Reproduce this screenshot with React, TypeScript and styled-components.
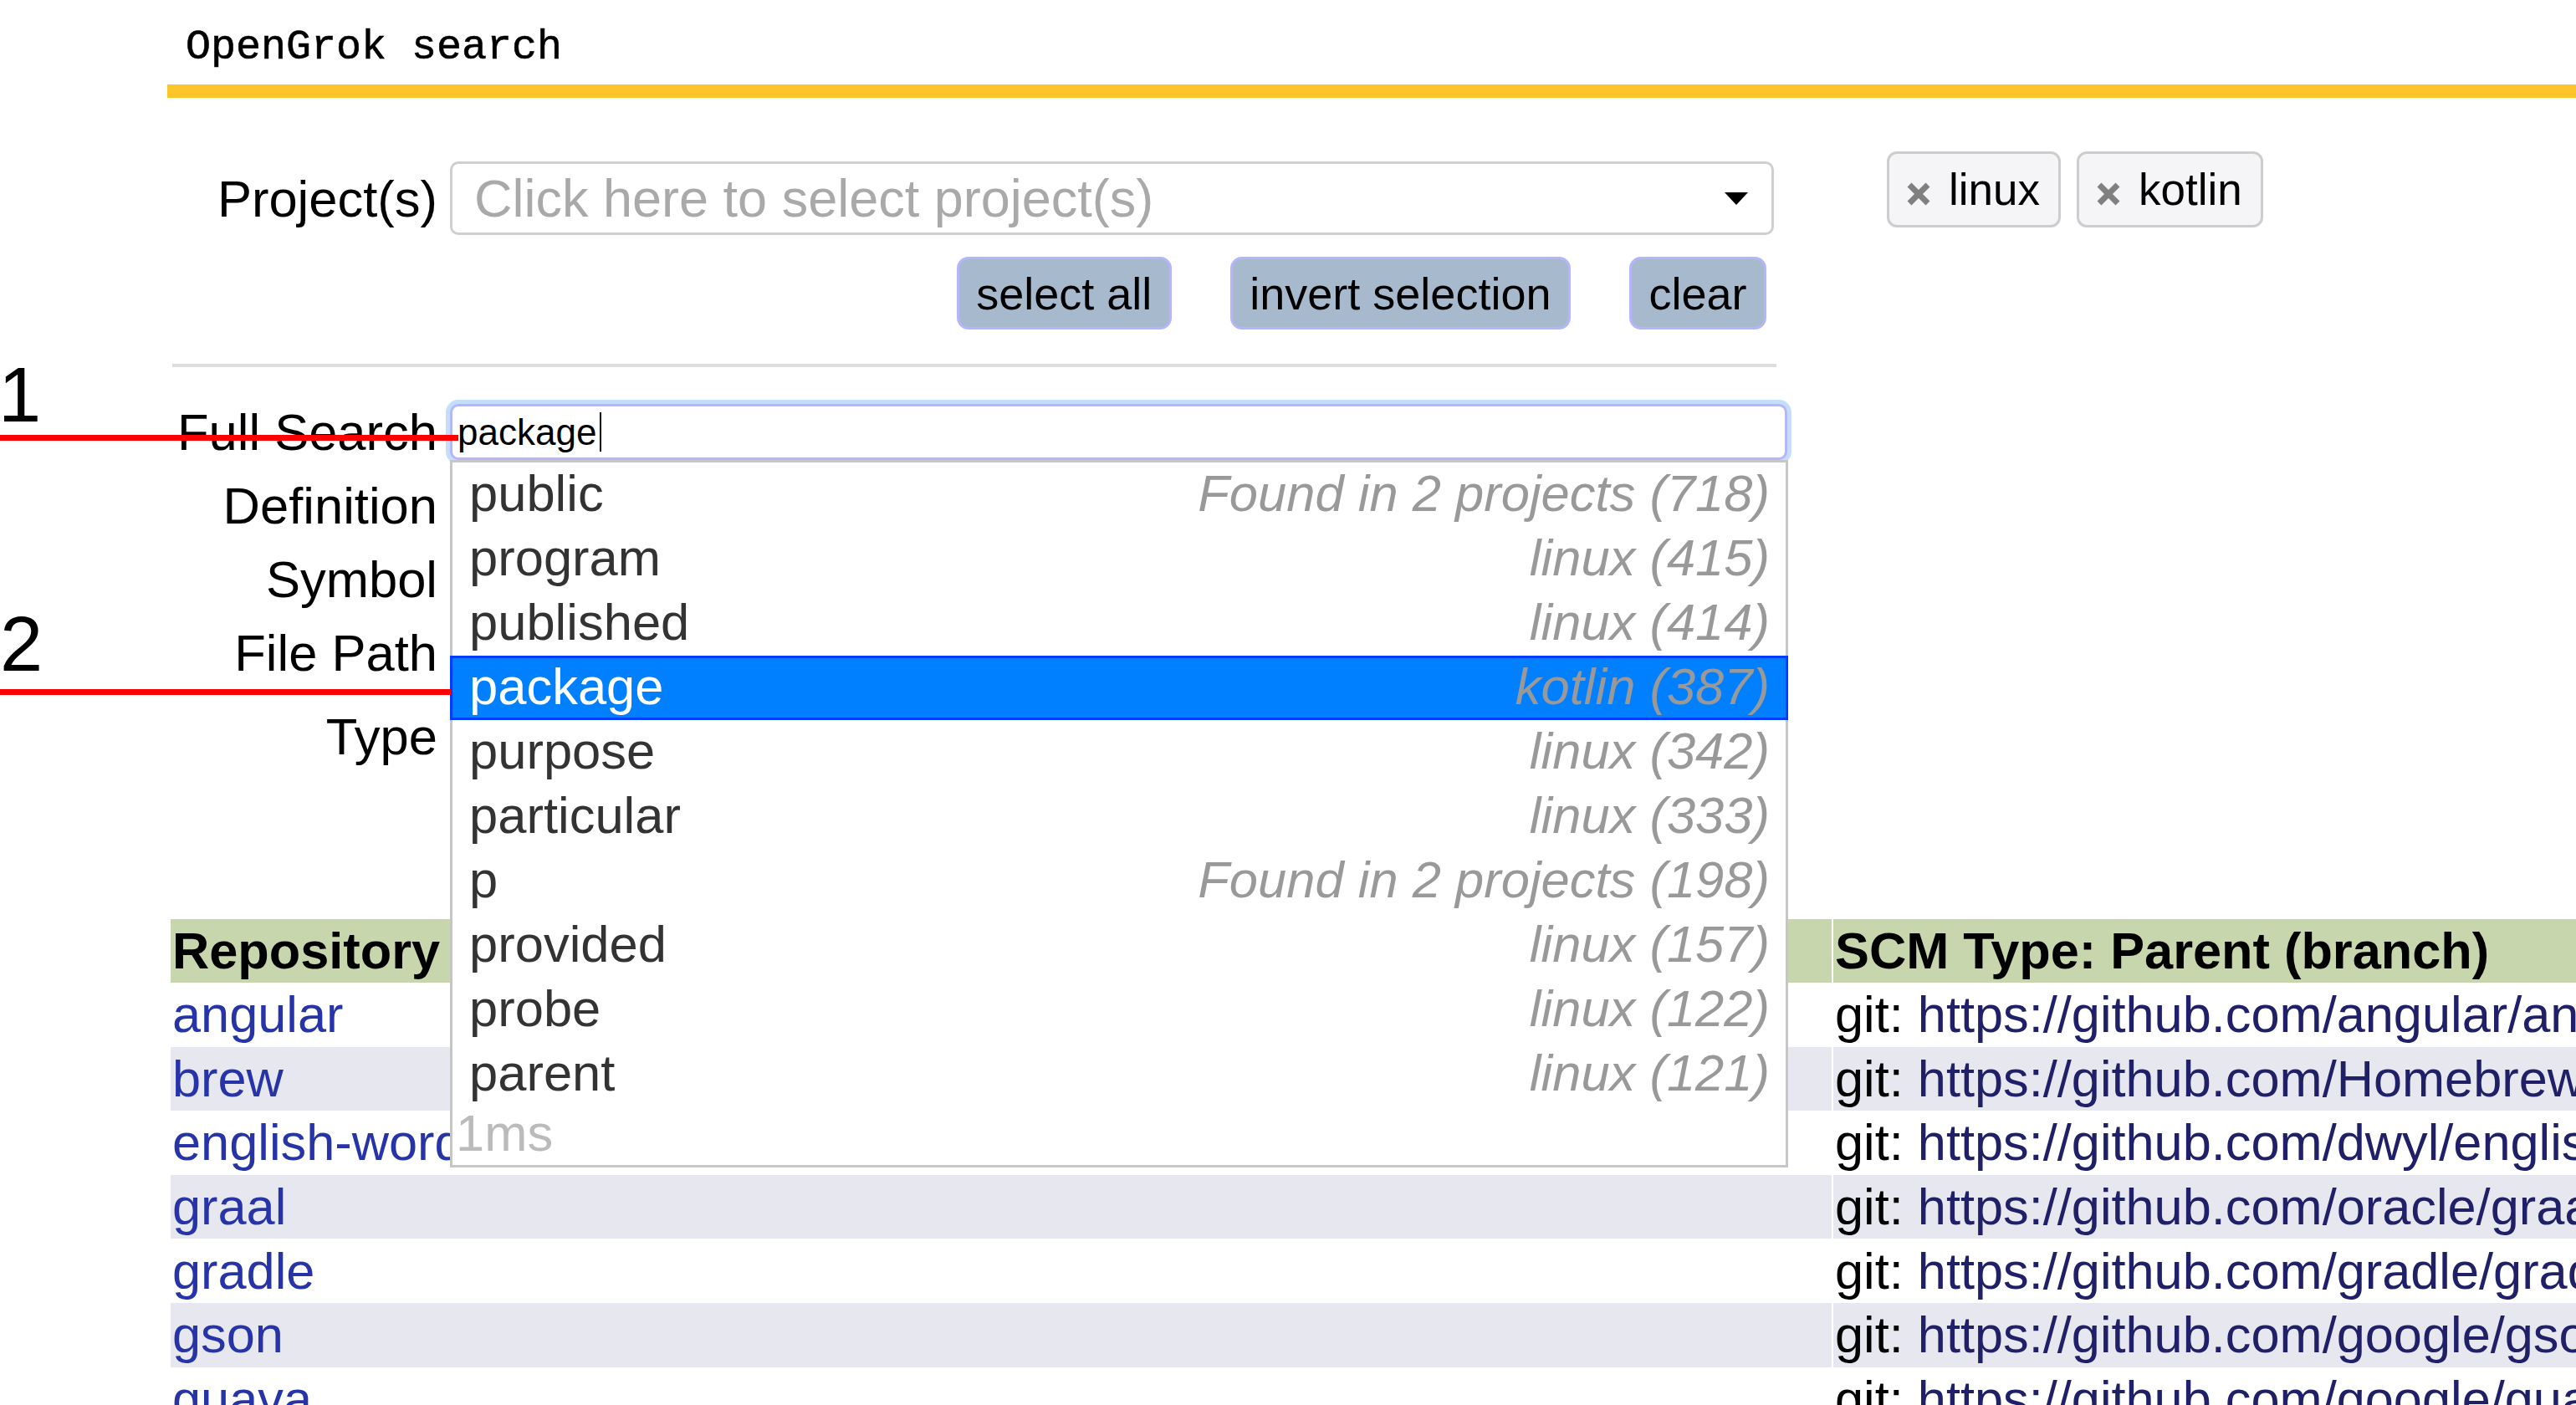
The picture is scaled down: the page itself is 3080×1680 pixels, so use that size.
import React from "react";
import styled, { createGlobalStyle } from "styled-components";

const GlobalStyle = createGlobalStyle`
  html, body {
    margin: 0;
    padding: 0;
    overflow: hidden;
    background: #ffffff;
  }
  body {
    font-family: "Liberation Sans", Arial, Helvetica, sans-serif;
    color: #000;
  }
  * { box-sizing: border-box; }
`;

const Page = styled.div`
  position: relative;
  width: 3080px;
  height: 1680px;
  overflow: hidden;
`;

const Header = styled.header`
  margin-left: 200px;
  padding-top: 32px;
`;

const Title = styled.div`
  font-family: "Liberation Mono", "Courier New", monospace;
  font-size: 50px;
  line-height: 50px;
  padding-left: 22px;
  margin-bottom: 19px;
  -webkit-text-stroke: 0.6px #000;
`;

const Bar = styled.div`
  height: 16px;
  background: #fcc62b;
`;

const Main = styled.main`
  margin-left: 204px;
`;

const ProjectRow = styled.div`
  display: flex;
  align-items: flex-start;
  margin-top: 64px;
`;

const ProjectGroup = styled.div`
  display: flex;
  align-items: center;
  margin-top: 12px;
`;

const RowLabel = styled.label`
  width: 319px;
  margin-right: 15px;
  text-align: right;
  font-size: 61.5px;
  line-height: 61px;
  white-space: nowrap;
`;

const ProjectSelect = styled.div`
  width: 1583px;
  height: 88px;
  border: 3px solid #cfcfcf;
  border-radius: 10px;
  background: #fff;
  display: flex;
  align-items: center;
  justify-content: space-between;
  padding: 0 28px 0 26px;
`;

const Placeholder = styled.span`
  font-size: 63px;
  line-height: 63px;
  color: #a9a9a9;
  white-space: nowrap;
`;

const TagList = styled.div`
  display: flex;
  gap: 19px;
  margin-left: 135px;
`;

const Tag = styled.div`
  height: 91px;
  border: 3px solid #cdcdcd;
  border-radius: 12px;
  background: #f5f5f8;
  display: flex;
  align-items: center;
  padding: 0 22px 0 20px;
  font-size: 53px;
  line-height: 53px;
`;

const TagClose = styled.svg`
  width: 30px;
  height: 28px;
  margin-right: 21px;
  margin-top: 10px;
  flex: none;
`;

const ActionRow = styled.div<{ $width: number; $top: number }>`
  display: flex;
  justify-content: flex-end;
  gap: 70px;
  width: ${(p) => p.$width}px;
  margin-top: ${(p) => p.$top}px;
`;

const ActionButton = styled.button`
  height: 87px;
  border: 3px solid #b5b5fb;
  border-radius: 14px;
  background: #a7b9cd;
  color: #000;
  font-family: "Liberation Sans", Arial, Helvetica, sans-serif;
  font-size: 54px;
  line-height: 54px;
  padding: 0 20.5px;
  white-space: nowrap;
`;

const Divider = styled.hr`
  border: 0;
  margin: 41px 0 0 2px;
  width: 1918px;
  height: 4px;
  background: #dddddd;
`;

const SearchGrid = styled.div`
  display: grid;
  grid-template-columns: 319px 1599px;
  column-gap: 15px;
  row-gap: 21px;
  align-items: center;
  margin-top: 44px;
`;

const FieldLabel = styled.label`
  text-align: right;
  font-size: 61.5px;
  line-height: 61px;
  white-space: nowrap;
`;

const FieldCell = styled.div`
  position: relative;
`;

const FocusedInput = styled.div`
  height: 67px;
  border: 3px solid #b6b6fb;
  border-radius: 10px;
  box-shadow: 0 0 0 5px #c4defd;
  background: #fff;
  display: flex;
  align-items: center;
  padding-left: 6px;
  font-size: 44px;
  line-height: 44px;
  color: #000;
`;

const Caret = styled.span`
  display: inline-block;
  width: 2px;
  height: 47px;
  margin-left: 4px;
  background: #000;
`;

const PlainInput = styled.div<{ $height: number }>`
  height: ${(p) => p.$height}px;
  border: 3px solid #cccccc;
  border-radius: 10px;
  background: #fff;
`;

const HiddenButtons = styled.div`
  display: flex;
  gap: 30px;
  height: 87px;
`;

const Dropdown = styled.ul`
  position: absolute;
  top: 100%;
  left: 0;
  right: -1px;
  margin: 0;
  padding: 0;
  list-style: none;
  background: #fff;
  border: 3px solid #c6c6c6;
  z-index: 10;
`;

const Item = styled.li<{ $active?: boolean }>`
  display: flex;
  justify-content: space-between;
  align-items: baseline;
  height: 77px;
  border: 3px solid ${(p) => (p.$active ? "#003eff" : "transparent")};
  background: ${(p) => (p.$active ? "#007fff" : "transparent")};
  color: ${(p) => (p.$active ? "#ffffff" : "#333333")};
  margin: 0 ${(p) => (p.$active ? -3 : 0)}px;
  padding: 0 ${(p) => (p.$active ? 19 : 16)}px 4px ${(p) => (p.$active ? 20 : 17)}px;
  font-size: 61.5px;
  line-height: 67px;
  white-space: nowrap;
`;

const Hint = styled.span`
  font-style: italic;
  color: #999999;
`;

const Timing = styled.li`
  height: 70px;
  padding-left: 4px;
  font-size: 61.5px;
  line-height: 64px;
  color: #bbbbbb;
`;

const RepoTable = styled.table`
  margin-top: 65px;
  border-collapse: separate;
  border-spacing: 0;
  font-size: 61.3px;
  width: 3400px;
  table-layout: fixed;
`;

const HeadCell = styled.th<{ $first?: boolean }>`
  height: 76px;
  padding: 0 2px;
  text-align: left;
  font-weight: bold;
  background: #c7d6ad;
  white-space: nowrap;
  overflow: hidden;
  border-left: ${(p) => (p.$first ? "0" : "2px solid #ffffff")};
`;

const BodyRow = styled.tr<{ $odd: boolean }>`
  height: 76.6px;
  background: ${(p) => (p.$odd ? "#e6e7ef" : "#ffffff")};
`;

const BodyCell = styled.td<{ $first?: boolean }>`
  padding: 0 2px;
  white-space: nowrap;
  overflow: hidden;
  vertical-align: middle;
  border-left: ${(p) => (p.$first ? "0" : "2px solid #ffffff")};
`;

const RepoLink = styled.a`
  color: #2634a8;
  text-decoration: none;
`;

const UrlLink = styled.a`
  color: #1f2068;
  text-decoration: none;
`;

const Marker = styled.div<{ $top: number; $left: number }>`
  position: absolute;
  top: ${(p) => p.$top}px;
  left: ${(p) => p.$left}px;
  font-size: 92px;
  line-height: 92px;
  color: #000;
  z-index: 20;
`;

const RedLine = styled.div<{ $top: number; $width: number }>`
  position: absolute;
  top: ${(p) => p.$top}px;
  left: 0;
  width: ${(p) => p.$width}px;
  height: 7px;
  background: #ff0000;
  z-index: 20;
`;

const suggestions: [string, string][] = [
  ["public", "Found in 2 projects (718)"],
  ["program", "linux (415)"],
  ["published", "linux (414)"],
  ["package", "kotlin (387)"],
  ["purpose", "linux (342)"],
  ["particular", "linux (333)"],
  ["p", "Found in 2 projects (198)"],
  ["provided", "linux (157)"],
  ["probe", "linux (122)"],
  ["parent", "linux (121)"],
];

const repos: [string, string][] = [
  ["angular", "https://github.com/angular/angular"],
  ["brew", "https://github.com/Homebrew/brew"],
  ["english-words", "https://github.com/dwyl/english-words"],
  ["graal", "https://github.com/oracle/graal"],
  ["gradle", "https://github.com/gradle/gradle"],
  ["gson", "https://github.com/google/gson"],
  ["guava", "https://github.com/google/guava"],
];

export default function App() {
  return (
    <>
      <GlobalStyle />
      <Page>
        <Header>
          <Title>OpenGrok search</Title>
          <Bar />
        </Header>
        <Main>
          <ProjectRow>
            <ProjectGroup>
              <RowLabel>Project(s)</RowLabel>
              <ProjectSelect>
                <Placeholder>Click here to select project(s)</Placeholder>
                <svg width="28" height="15" viewBox="0 0 28 15">
                  <polygon points="0,0 28,0 14,15" fill="#000" />
                </svg>
              </ProjectSelect>
            </ProjectGroup>
            <TagList>
              {["linux", "kotlin"].map((t) => (
                <Tag key={t}>
                  <TagClose viewBox="0 0 30 28">
                    <path d="M4 3 L26 25 M26 3 L4 25" stroke="#808080" strokeWidth="7" />
                  </TagClose>
                  {t}
                </Tag>
              ))}
            </TagList>
          </ProjectRow>
          <ActionRow $width={1908} $top={26}>
            <ActionButton>select all</ActionButton>
            <ActionButton>invert selection</ActionButton>
            <ActionButton>clear</ActionButton>
          </ActionRow>
          <Divider />
          <SearchGrid>
            <FieldLabel>Full Search</FieldLabel>
            <FieldCell>
              <FocusedInput>
                package
                <Caret />
              </FocusedInput>
              <Dropdown>
                {suggestions.map(([word, hint]) => (
                  <Item key={word} $active={word === "package"}>
                    <span>{word}</span>
                    <Hint>{hint}</Hint>
                  </Item>
                ))}
                <Timing>1ms</Timing>
              </Dropdown>
            </FieldCell>
            <FieldLabel>Definition</FieldLabel>
            <PlainInput $height={67} />
            <FieldLabel>Symbol</FieldLabel>
            <PlainInput $height={67} />
            <FieldLabel>File Path</FieldLabel>
            <PlainInput $height={67} />
            <FieldLabel>Type</FieldLabel>
            <PlainInput $height={91} />
            <span />
            <HiddenButtons>
              <ActionButton>Search</ActionButton>
              <ActionButton>Clear</ActionButton>
              <ActionButton>Help</ActionButton>
            </HiddenButtons>
          </SearchGrid>
          <RepoTable>
            <colgroup>
              <col style={{ width: 1986 }} />
              <col />
            </colgroup>
            <thead>
              <tr>
                <HeadCell $first>Repository</HeadCell>
                <HeadCell>SCM Type: Parent (branch)</HeadCell>
              </tr>
            </thead>
            <tbody>
              {repos.map(([name, url], i) => (
                <BodyRow key={name} $odd={i % 2 === 1}>
                  <BodyCell $first>
                    <RepoLink href="#">{name}</RepoLink>
                  </BodyCell>
                  <BodyCell>
                    git: <UrlLink href="#">{url}</UrlLink> (master)
                  </BodyCell>
                </BodyRow>
              ))}
            </tbody>
          </RepoTable>
        </Main>
        <Marker $top={426} $left={-2}>1</Marker>
        <RedLine $top={520} $width={548} />
        <Marker $top={724} $left={0}>2</Marker>
        <RedLine $top={824} $width={539} />
      </Page>
    </>
  );
}
